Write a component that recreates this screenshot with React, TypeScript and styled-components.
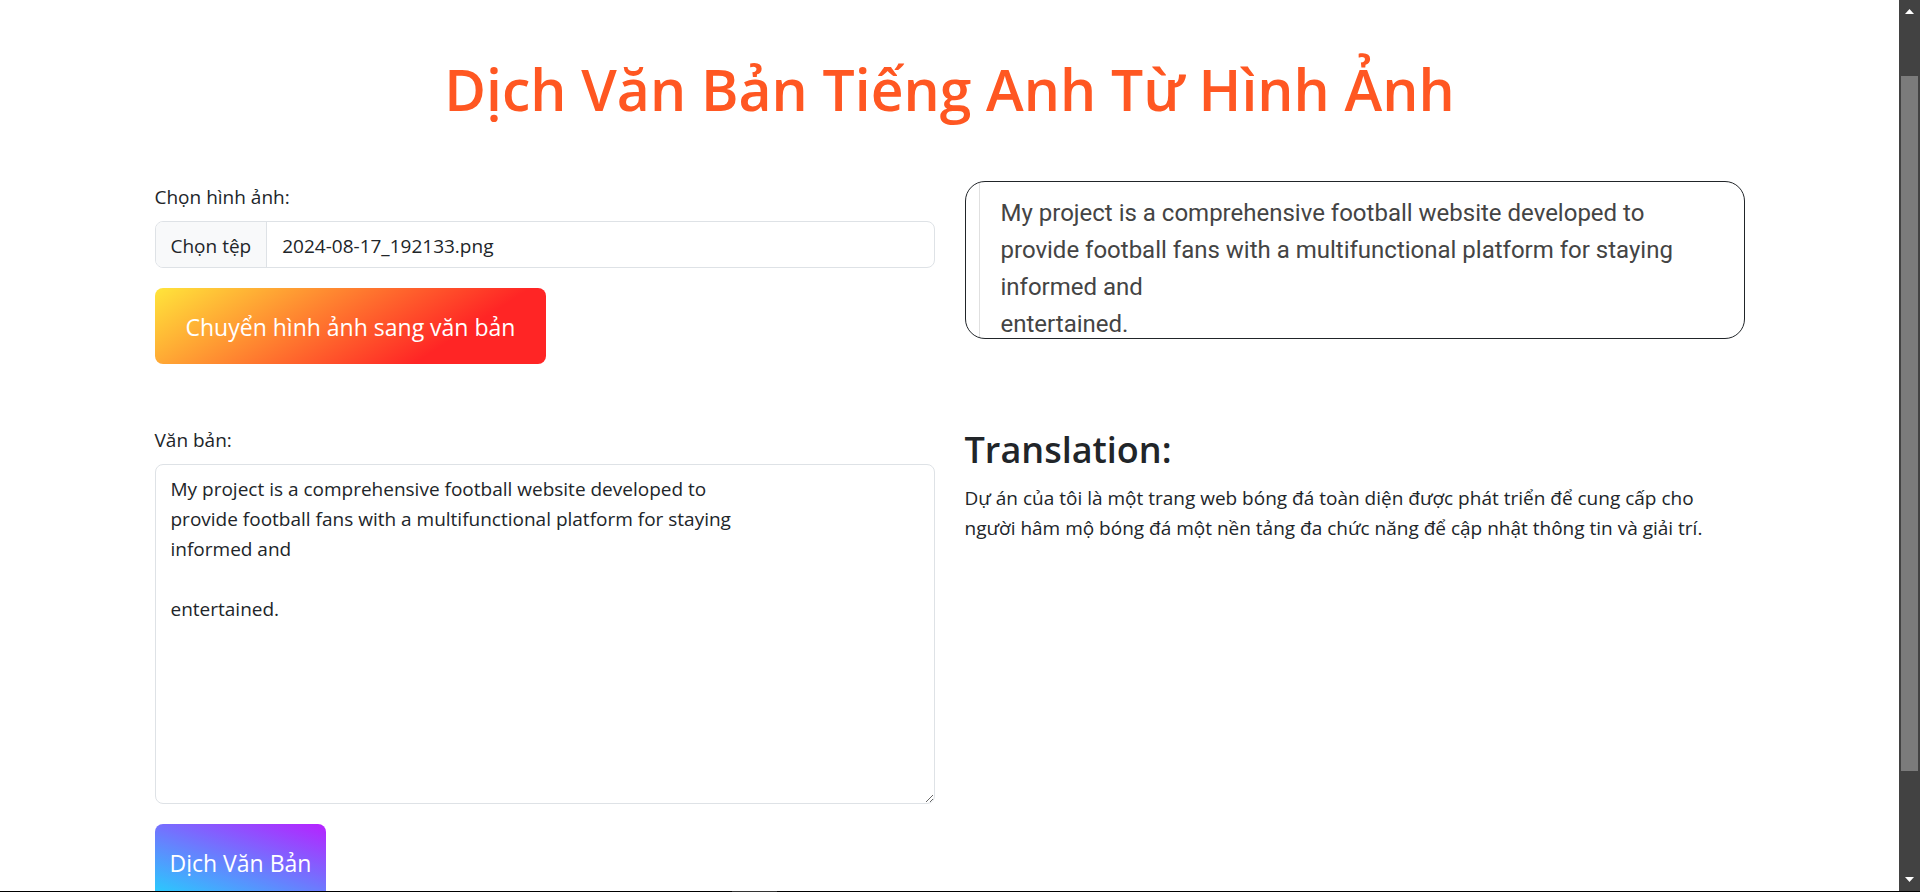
import React, { useState } from "react";
import styled, { createGlobalStyle } from "styled-components";

const GlobalStyle = createGlobalStyle`
  *, *::before, *::after { box-sizing: border-box; }
  body {
    margin: 0;
    background: #fff;
    color: #212529;
    font-family: "Segoe UI", "Open Sans", "Noto Sans", sans-serif;
    font-size: 19px;
    line-height: 30px;
  }
`;

const Screen = styled.div`
  display: grid;
  grid-template: minmax(0, 1fr) 1px / minmax(0, 1fr) 21px;
  height: 100vh;
  overflow: hidden;
`;

const Viewport = styled.div`
  overflow: hidden;
`;

const Container = styled.main`
  max-width: 1650px;
  margin: 0 auto;
  padding: 49px 30px 0;
`;

const Title = styled.h1`
  margin: 0 0 52px;
  color: #ff5722;
  font-size: 57px;
  font-weight: 600;
  line-height: 80px;
  text-align: center;
`;

const Row = styled.section`
  display: grid;
  grid-template-columns: repeat(2, minmax(0, 1fr));
  align-items: start;
  column-gap: 30px;
  margin-bottom: 60px;
`;

const Field = styled.div`
  display: flex;
  flex-direction: column;
  align-items: flex-start;
`;

const Label = styled.label`
  margin-bottom: 8px;
  line-height: 32px;
`;

const HiddenFile = styled.input`
  position: absolute;
  width: 1px;
  height: 1px;
  opacity: 0;
`;

const FileControl = styled.label`
  display: flex;
  width: 100%;
  height: 47px;
  margin-bottom: 20px;
  border: 1px solid #dee2e6;
  border-radius: 8px;
  overflow: hidden;
  line-height: 48px;
  cursor: pointer;
`;

const FileButton = styled.span`
  padding: 0 15px;
  border-right: 1px solid #dee2e6;
  background: #f8f9fa;
`;

const FileName = styled.span`
  padding: 0 15px;
`;

const GradientButton = styled.button<{ $fill: string; $pad: number }>`
  height: 76px;
  padding: 2px ${(p) => p.$pad}px 0;
  border: 0;
  border-radius: 8px;
  background: ${(p) => p.$fill};
  color: #fff;
  font: inherit;
  font-size: 23px;
  cursor: pointer;
`;

const TextArea = styled.textarea`
  display: block;
  width: 100%;
  height: 340px;
  margin-bottom: 20px;
  padding: 9px 15px;
  border: 1px solid #dee2e6;
  border-radius: 8px;
  background: #fff;
  color: inherit;
  font: inherit;
  resize: vertical;
`;

const Preview = styled.figure`
  height: 158px;
  margin: 0;
  padding: 0 0 0 13px;
  border: 1px solid #212529;
  border-radius: 20px;
  overflow: hidden;
`;

const PreviewText = styled.p`
  margin: 0;
  padding: 13px 0 0 21px;
  border-left: 1px solid #e0e0e0;
  color: #444;
  font-family: Roboto, sans-serif;
  font-size: 24px;
  line-height: 37px;
  white-space: pre-line;
`;

const Subtitle = styled.h2`
  margin: 0 0 7px;
  font-size: 36px;
  font-weight: 600;
  line-height: 52px;
`;

const Paragraph = styled.p`
  margin: 0;
`;

const ScrollTrack = styled.div`
  display: flex;
  flex-direction: column;
  align-items: center;
  padding: 9px 0;
  background: #424242;
`;

const ScrollThumb = styled.div`
  flex: 695;
  width: 17px;
  background: #7b7b7b;
`;

const Space = styled.div<{ $grow: number }>`
  flex: ${(p) => p.$grow};
`;

const Arrow = styled.svg`
  display: block;
  fill: #fff;
`;

const TaskEdge = styled.div`
  display: grid;
  grid-column: 1 / -1;
  grid-template-columns: 732fr 45fr 1143fr;
  background: #000;
`;

const ActiveTask = styled.div`
  grid-column: 2;
  background: #333;
`;

const SOURCE = `My project is a comprehensive football website developed to
provide football fans with a multifunctional platform for staying
informed and
`;

export default function App() {
  const [text, setText] = useState(SOURCE + "\nentertained.");
  const [fileName, setFileName] = useState("2024-08-17_192133.png");

  return (
    <>
      <GlobalStyle />
      <Screen>
        <Viewport>
          <Container>
            <Title>Dịch Văn Bản Tiếng Anh Từ Hình Ảnh</Title>
            <Row>
              <Field>
                <Label htmlFor="image">Chọn hình ảnh:</Label>
                <HiddenFile
                  id="image"
                  type="file"
                  accept="image/*"
                  onChange={(e) => setFileName(e.target.files?.[0]?.name ?? fileName)}
                />
                <FileControl htmlFor="image">
                  <FileButton>Chọn tệp</FileButton>
                  <FileName>{fileName}</FileName>
                </FileControl>
                <GradientButton
                  type="button"
                  $pad={31}
                  $fill="linear-gradient(147deg, #ffe53b 0%, #ff2525 74%)"
                >
                  Chuyển hình ảnh sang văn bản
                </GradientButton>
              </Field>
              <Preview>
                <PreviewText>{SOURCE + "entertained."}</PreviewText>
              </Preview>
            </Row>
            <Row>
              <Field>
                <Label htmlFor="text">Văn bản:</Label>
                <TextArea id="text" value={text} onChange={(e) => setText(e.target.value)} />
                <GradientButton
                  type="button"
                  $pad={15}
                  $fill="linear-gradient(19deg, #21d4fd 0%, #b721ff 100%)"
                >
                  Dịch Văn Bản
                </GradientButton>
              </Field>
              <div>
                <Subtitle>Translation:</Subtitle>
                <Paragraph>
                  Dự án của tôi là một trang web bóng đá toàn diện được phát triển để cung cấp cho
                  người hâm mộ bóng đá một nền tảng đa chức năng để cập nhật thông tin và giải trí.
                </Paragraph>
              </div>
            </Row>
          </Container>
        </Viewport>
        <ScrollTrack aria-hidden="true">
          <Arrow width="9" height="5" viewBox="0 0 9 5">
            <path d="M4.5 0 9 5H0z" />
          </Arrow>
          <Space $grow={62} />
          <ScrollThumb />
          <Space $grow={106} />
          <Arrow width="9" height="5" viewBox="0 0 9 5">
            <path d="M0 0h9L4.5 5z" />
          </Arrow>
        </ScrollTrack>
        <TaskEdge>
          <ActiveTask />
        </TaskEdge>
      </Screen>
    </>
  );
}
